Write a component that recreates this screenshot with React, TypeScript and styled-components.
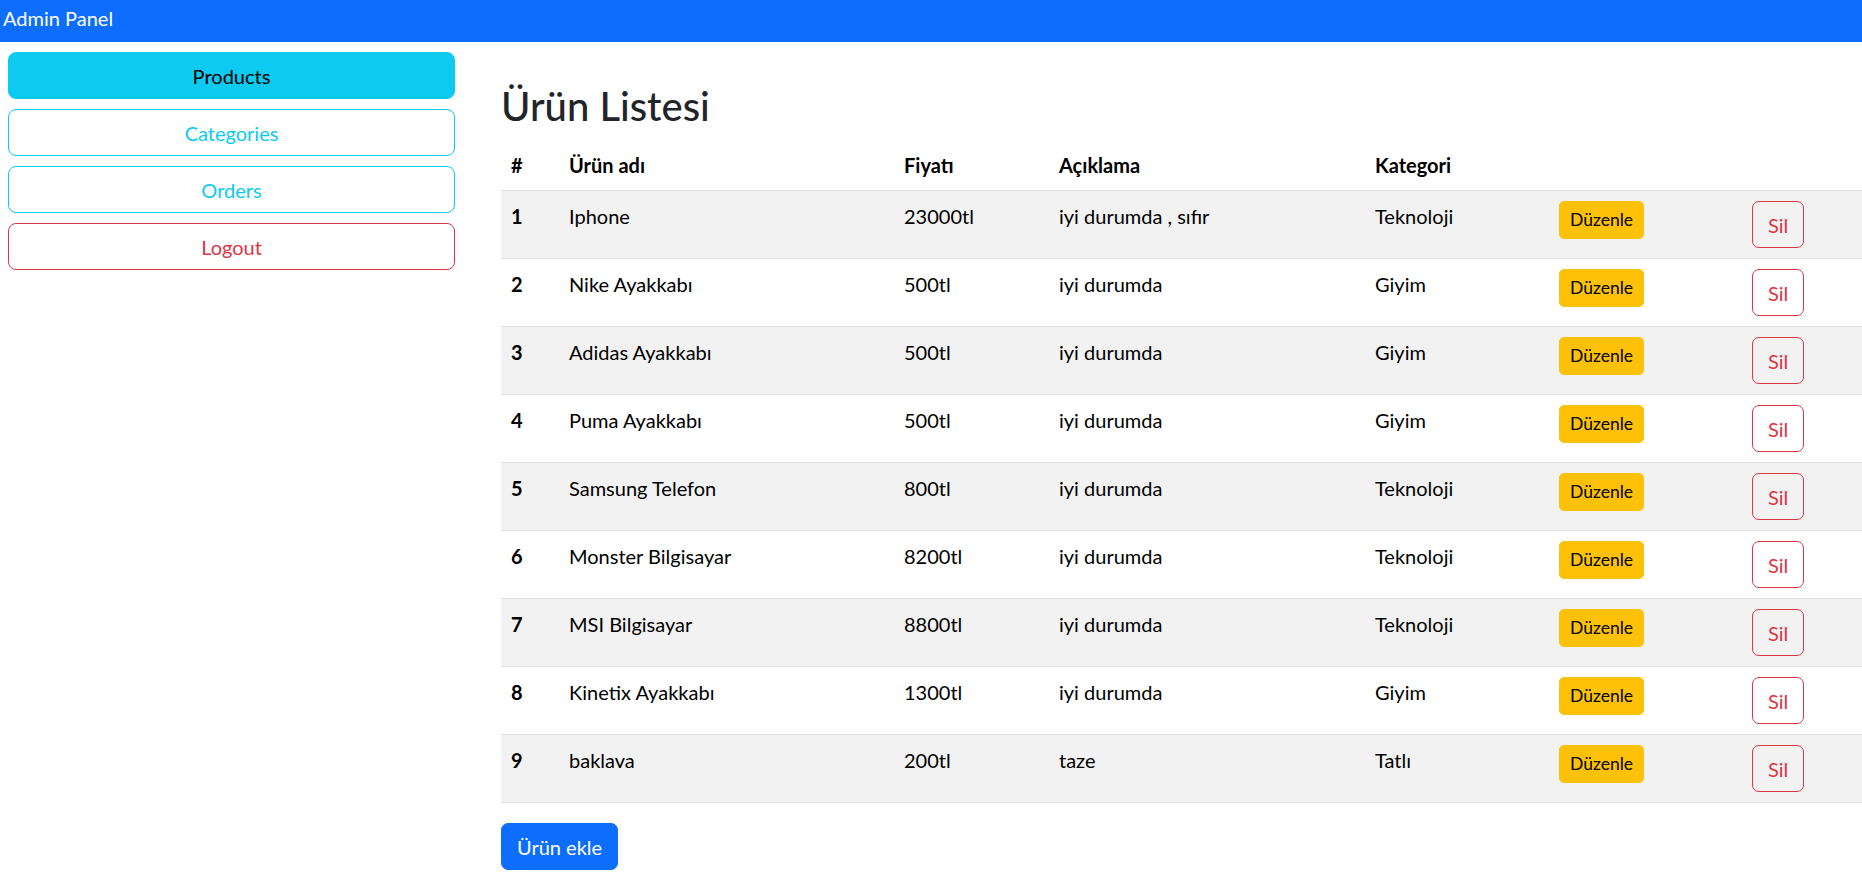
import React from 'react';
import styled, { createGlobalStyle, css } from 'styled-components';

const GlobalStyle = createGlobalStyle`
	* {
		box-sizing: border-box;
	}

	body {
		margin: 0;
		font-family: Lato, "Noto Sans", sans-serif;
		font-size: 20px;
		line-height: 1.5;
		color: #212529;
		background: #fff;
	}
`;

type Product = {
	id: number;
	name: string;
	price: string;
	description: string;
	category: string;
};

const products: Product[] = [
	{ id: 1, name: 'Iphone', price: '23000tl', description: 'iyi durumda , sıfır', category: 'Teknoloji' },
	{ id: 2, name: 'Nike Ayakkabı', price: '500tl', description: 'iyi durumda', category: 'Giyim' },
	{ id: 3, name: 'Adidas Ayakkabı', price: '500tl', description: 'iyi durumda', category: 'Giyim' },
	{ id: 4, name: 'Puma Ayakkabı', price: '500tl', description: 'iyi durumda', category: 'Giyim' },
	{ id: 5, name: 'Samsung Telefon', price: '800tl', description: 'iyi durumda', category: 'Teknoloji' },
	{ id: 6, name: 'Monster Bilgisayar', price: '8200tl', description: 'iyi durumda', category: 'Teknoloji' },
	{ id: 7, name: 'MSI Bilgisayar', price: '8800tl', description: 'iyi durumda', category: 'Teknoloji' },
	{ id: 8, name: 'Kinetix Ayakkabı', price: '1300tl', description: 'iyi durumda', category: 'Giyim' },
	{ id: 9, name: 'baklava', price: '200tl', description: 'taze', category: 'Tatlı' },
];

const menu: { label: string; variant: 'info' | 'outlineInfo' | 'outlineDanger' }[] = [
	{ label: 'Products', variant: 'info' },
	{ label: 'Categories', variant: 'outlineInfo' },
	{ label: 'Orders', variant: 'outlineInfo' },
	{ label: 'Logout', variant: 'outlineDanger' },
];

const App = () => {

	return (
		<>
			<GlobalStyle />

			<Navbar>
				<Brand>Admin Panel</Brand>
			</Navbar>

			<Layout>
				<Sidebar>
					{menu.map(item => (
						<MenuButton key={item.label} $variant={item.variant}>
							{item.label}
						</MenuButton>
					))}
				</Sidebar>

				<Main>
					<Title>Ürün Listesi</Title>

					<Table>
						<colgroup>
							<col style={{ width: 58 }} />
							<col style={{ width: 335 }} />
							<col style={{ width: 155 }} />
							<col style={{ width: 316 }} />
							<col style={{ width: 184 }} />
							<col style={{ width: 193 }} />
							<col />
						</colgroup>
						<thead>
							<tr>
								<Th>#</Th>
								<Th>Ürün adı</Th>
								<Th>Fiyatı</Th>
								<Th>Açıklama</Th>
								<Th>Kategori</Th>
								<Th></Th>
								<Th></Th>
							</tr>
						</thead>
						<tbody>
							{products.map((p, i) => (
								<Row key={p.id} $striped={i % 2 === 0}>
									<Th as="td">{p.id}</Th>
									<Td>{p.name}</Td>
									<Td>{p.price}</Td>
									<Td>{p.description}</Td>
									<Td>{p.category}</Td>
									<Td>
										<EditButton>Düzenle</EditButton>
									</Td>
									<Td>
										<DeleteButton>Sil</DeleteButton>
									</Td>
								</Row>
							))}
						</tbody>
					</Table>

					<AddButton>Ürün ekle</AddButton>
				</Main>
			</Layout>
		</>
	);
}

const Navbar = styled.nav`
	height: 42px;
	background-color: #0d6efd;

	display: flex;
	align-items: flex-start;

	padding: 3px 3px 0;
`;

const Brand = styled.span`
	color: #fff;
	font-size: 20px;
	line-height: 30px;
`;

const Layout = styled.div`
	display: flex;
	align-items: flex-start;
`;

const Sidebar = styled.aside`
	width: 463px;
	flex-shrink: 0;

	display: flex;
	flex-direction: column;
	gap: 10px;

	padding: 10px 8px;
`;

const variants = {
	info: css`
		background-color: #0dcaf0;
		border-color: #0dcaf0;
		color: #000;
	`,
	outlineInfo: css`
		background-color: transparent;
		border-color: #0dcaf0;
		color: #0dcaf0;
	`,
	outlineDanger: css`
		background-color: transparent;
		border-color: #dc3545;
		color: #dc3545;
	`,
};

const BaseButton = styled.button`
	font-family: inherit;
	font-weight: 400;
	line-height: 1.5;
	border: 1px solid transparent;
	cursor: pointer;
	text-align: center;
	display: inline-block;
`;

const MenuButton = styled(BaseButton)<{ $variant: keyof typeof variants }>`
	width: 100%;
	height: 47px;
	font-size: 20px;
	padding: 0 20px;
	border-radius: 8px;

	${({ $variant }) => variants[$variant]}
`;

const Main = styled.main`
	flex: 1;
	min-width: 0;

	padding: 40px 0 0 38px;
`;

const Title = styled.h2`
	margin: 0 0 10px;
	font-size: 40px;
	font-weight: 500;
	line-height: 48px;
	color: #212529;
`;

const Table = styled.table`
	width: 100%;
	table-layout: fixed;
	border-collapse: collapse;
	color: #000;
	margin-bottom: 20px;
`;

const Th = styled.th`
	text-align: left;
	font-weight: 700;
	vertical-align: top;
	padding: 10px;
	line-height: 30px;
	border-bottom: 1px solid #dee2e6;
`;

const Td = styled.td`
	vertical-align: top;
	padding: 10px;
	line-height: 30px;
	border-bottom: 1px solid #dee2e6;
`;

const Row = styled.tr<{ $striped: boolean }>`
	background-color: ${({ $striped }) => ($striped ? '#f2f2f2' : 'transparent')};
`;

const EditButton = styled(BaseButton)`
	display: block;
	height: 38px;
	font-size: 17.5px;
	line-height: 26px;
	padding: 0 10px;
	border-radius: 5px;
	background-color: #ffc107;
	border-color: #ffc107;
	color: #000;
`;

const DeleteButton = styled(BaseButton)`
	display: block;
	height: 47px;
	font-size: 20px;
	line-height: 30px;
	padding: 0 15px;
	border-radius: 7px;
	background-color: transparent;
	border-color: #dc3545;
	color: #dc3545;
`;

const AddButton = styled(BaseButton)`
	height: 47px;
	font-size: 20px;
	line-height: 30px;
	padding: 0 15px;
	border-radius: 7px;
	background-color: #0d6efd;
	border-color: #0d6efd;
	color: #fff;
`;

export default App;
